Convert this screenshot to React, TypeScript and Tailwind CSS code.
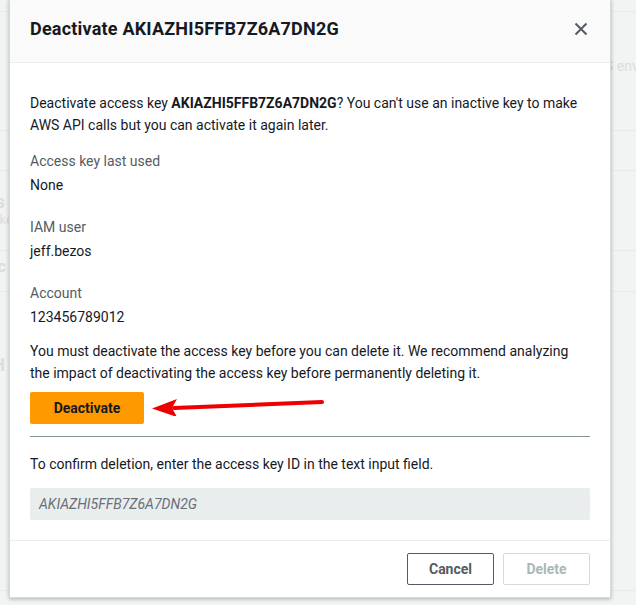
import React from "react";

const font = { fontFamily: "Roboto, 'Liberation Sans', sans-serif" };

const Field = ({ label, value }: { label: string; value: string }) => (
  <div className="mb-[20px]">
    <div className="text-[14px] leading-[22px] text-[#545b64]">{label}</div>
    <div className="mt-[2px] text-[14px] leading-[22px] text-[#16191f]">{value}</div>
  </div>
);

const Backdrop = () => (
  <div className="flex flex-col text-[#dadddd]">
    <div className="h-[12px] border-b border-[#e9ebeb]" />
    <div className="h-[119px] border-b border-[#e9ebeb] pt-[44px] pl-[584px] text-[14px] whitespace-nowrap">
      AWS environment
    </div>
    <div className="h-[40px] border-b border-[#e9ebeb]" />
    <div className="h-[80px] border-b border-[#e9ebeb] whitespace-nowrap">
      <div className="ml-[-96px] mt-[20px] text-[18px] font-bold leading-[22px]">Access keys</div>
      <div className="flex text-[13px] leading-[14px]">
        <span className="ml-[-70px]">Use access keys</span>
        <span className="ml-[500px]">API calls</span>
      </div>
      <div className="ml-[-60px] text-[13px] leading-[14px]">Inactive</div>
    </div>
    <div className="h-[41px] border-b border-[#e9ebeb] pt-[4px] whitespace-nowrap">
      <div className="ml-[-30px] text-[16px] font-bold">Deac</div>
    </div>
    <div className="h-[299px] border-b border-[#e9ebeb] whitespace-nowrap">
      <div className="ml-[-30px] mt-[62px] text-[18px] font-bold leading-[22px]">SSH</div>
      <div className="ml-[-60px] mt-[10px] text-[13px]">Static</div>
      <div className="ml-[-60px] mt-[6px] text-[13px]">Inact</div>
      <div className="ml-[-60px] mt-[26px] text-[14px]">Add</div>
      <div className="ml-[-60px] mt-[58px] text-[14px]">Add</div>
    </div>
  </div>
);

export default function App() {
  return (
    <div className="relative h-[605px] w-[636px] overflow-hidden bg-[#f2f3f3]" style={font}>
      <Backdrop />
      <div className="absolute left-[9px] top-[-1px] w-[602px] border border-[#d5dbdb] bg-white shadow-[0_1px_4px_rgba(0,28,36,0.3)]">
        <div className="flex h-[63px] items-center justify-between border-b border-[#eaeded] bg-[#fafafa] pl-[20px] pr-[22px] pb-[4px]">
          <h2 className="text-[18px] font-bold leading-[22px] tracking-[0.2px] text-[#16191f]">
            Deactivate AKIAZHI5FFB7Z6A7DN2G
          </h2>
          <svg width="14" height="14" viewBox="0 0 14 14" className="text-[#545b64]">
            <path d="M1.5 1.5 L12.5 12.5 M12.5 1.5 L1.5 12.5" stroke="currentColor" strokeWidth="2" fill="none" />
          </svg>
        </div>

        <div className="px-[20px] pt-[29px] pb-[20px]">
          <p className="mb-[14px] text-[14px] leading-[22px] text-[#16191f]">
            Deactivate access key <b>AKIAZHI5FFB7Z6A7DN2G</b>? You can't use an inactive key to make AWS API calls but
            you can activate it again later.
          </p>
          <Field label="Access key last used" value="None" />
          <Field label="IAM user" value="jeff.bezos" />
          <div className="mb-[12px]">
            <div className="text-[14px] leading-[22px] text-[#545b64]">Account</div>
            <div className="mt-[2px] text-[14px] leading-[22px] text-[#16191f]">123456789012</div>
          </div>
          <p className="text-[14px] leading-[22px] text-[#16191f]">
            You must deactivate the access key before you can delete it. We recommend analyzing the impact of
            deactivating the access key before permanently deleting it.
          </p>
          <div className="mt-[8px] flex items-center">
            <button className="h-[32px] w-[114px] rounded-[2px] bg-[#ff9900] text-[14px] font-bold text-[#16191f]">
              Deactivate
            </button>
            <svg width="184" height="20" viewBox="0 0 184 20" className="ml-[6px] mt-[-4px]">
              <path d="M172 6 L24 12" stroke="#ee0000" strokeWidth="4" strokeLinecap="round" fill="none" />
              <path d="M2 12.5 L27 3 L22 12 L27 21 Z" fill="#ee0000" />
            </svg>
          </div>
          <div className="mt-[12px] border-t border-[#879596]" />
          <p className="mt-[16px] text-[14px] leading-[22px] text-[#16191f]">
            To confirm deletion, enter the access key ID in the text input field.
          </p>
          <div className="mt-[13px] flex h-[32px] items-center rounded-[2px] bg-[#eaeded] px-[9px] text-[14px] italic text-[#687078]">
            AKIAZHI5FFB7Z6A7DN2G
          </div>
        </div>

        <div className="flex justify-end gap-[9px] border-t border-[#eaeded] px-[20px] pt-[12px] pb-[12px]">
          <button className="h-[32px] w-[87px] rounded-[2px] border border-[#545b64] bg-white text-[14px] font-bold text-[#545b64]">
            Cancel
          </button>
          <button className="h-[32px] w-[87px] rounded-[2px] border border-[#d5dbdb] bg-white text-[14px] font-bold text-[#aab7b8]">
            Delete
          </button>
        </div>
      </div>
    </div>
  );
}
